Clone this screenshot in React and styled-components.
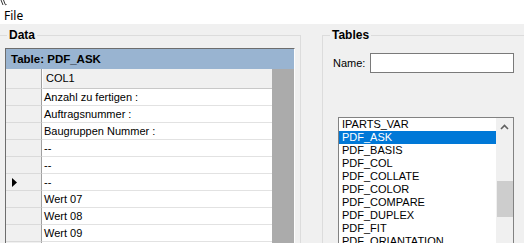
import styled, { createGlobalStyle } from "styled-components";

const GlobalStyle = createGlobalStyle`
  html, body {
    margin: 0;
    padding: 0;
    width: 524px;
    height: 243px;
    overflow: hidden;
    background: #f0f0f0;
  }
  body {
    font-family: "Liberation Sans", Arial, sans-serif;
    font-size: 11px;
    color: #000;
  }
`;

const Window = styled.div`
  width: 524px;
  height: 243px;
  display: flex;
  flex-direction: column;
  overflow: hidden;
`;

const MenuBar = styled.div`
  height: 24px;
  background: #fff;
  display: flex;
  flex-direction: column;
  flex-shrink: 0;
`;

const Corner = styled.svg`
  display: block;
  width: 8px;
  height: 6px;
`;

const MenuItem = styled.span`
  font-family: "Noto Sans", "Open Sans", sans-serif;
  font-size: 12px;
  line-height: 16px;
  padding: 2px 0 0 4px;
`;

const Main = styled.div`
  display: flex;
  align-items: flex-start;
  padding-top: 4px;
  gap: 21px;
`;

const Group = styled.fieldset`
  box-sizing: border-box;
  margin: 0 0 0 ${(p) => p.$offset || 0}px;
  width: ${(p) => p.$width}px;
  height: 260px;
  min-width: 0;
  border: 1px solid #dcdcdc;
  padding: 6px ${(p) => p.$padRight}px 0 ${(p) => p.$padLeft}px;
  flex-shrink: 0;
`;

const Legend = styled.legend`
  font-weight: bold;
  font-size: 12px;
  line-height: 14px;
  padding: 0 2px;
  margin-left: ${(p) => p.$shift || 0}px;
`;

const Grid = styled.div`
  border: 1px solid;
  border-color: #6d6d6d #fdfdfd #fdfdfd #6d6d6d;
  height: 220px;
  display: flex;
  flex-direction: column;
  background: #ababab;
`;

const Caption = styled.div`
  height: 20px;
  background: #99b4d1;
  font-weight: bold;
  font-size: 11.5px;
  line-height: 20px;
  padding-left: 5px;
  flex-shrink: 0;
`;

const Row = styled.div`
  display: flex;
  width: 266px;
  height: ${(p) => (p.$header ? 20 : 17)}px;
  flex-shrink: 0;
`;

const RowHead = styled.div`
  width: 36px;
  background: #f0f0f0;
  border-right: 1px solid #a0a0a0;
  border-bottom: 1px solid #dadada;
  display: flex;
  align-items: center;
  padding-left: 6px;
  box-sizing: border-box;
  flex-shrink: 0;
`;

const Cell = styled.div`
  flex: 1;
  background: ${(p) => (p.$header ? "#f0f0f0" : "#fff")};
  border-bottom: 1px solid ${(p) => (p.$header ? "#c8c8c8" : "#e2e2e2")};
  border-left: ${(p) => (p.$header ? "1px solid #fff" : "none")};
  padding-left: ${(p) => (p.$header ? 3 : 2)}px;
  line-height: ${(p) => (p.$header ? 19 : 16)}px;
  white-space: nowrap;
  overflow: hidden;
`;

const Arrow = styled.svg`
  width: 5px;
  height: 9px;
  display: block;
`;

const NameRow = styled.div`
  display: flex;
  align-items: center;
  margin: 5px 0 0 3px;
`;

const Label = styled.label`
  width: 37px;
  flex-shrink: 0;
`;

const TextBox = styled.input`
  box-sizing: border-box;
  width: 144px;
  height: 20px;
  border: 1px solid #7a7a7a;
  background: #fff;
  margin: 0;
  padding: 0 3px;
  outline: none;
`;

const ListBox = styled.div`
  box-sizing: border-box;
  width: 176px;
  height: 140px;
  margin: 44px 0 0 8px;
  border: 1px solid #828282;
  background: #fff;
  display: flex;
`;

const Items = styled.div`
  flex: 1;
  display: flex;
  flex-direction: column;
`;

const Item = styled.div`
  height: 13px;
  line-height: 13px;
  padding-left: 3px;
  white-space: nowrap;
  background: ${(p) => (p.$selected ? "#0078d7" : "transparent")};
  color: ${(p) => (p.$selected ? "#fff" : "#000")};
`;

const ScrollBar = styled.div`
  width: 17px;
  background: #f0f0f0;
  display: flex;
  flex-direction: column;
  align-items: center;
`;

const ScrollButton = styled.div`
  height: 17px;
  width: 17px;
  display: flex;
  align-items: center;
  justify-content: center;
`;

const Thumb = styled.div`
  width: 16px;
  height: 36px;
  background: #cdcdcd;
  margin-top: ${(p) => p.$top}px;
`;

const rows = [
  "Anzahl zu fertigen :",
  "Auftragsnummer :",
  "Baugruppen Nummer :",
  "--",
  "--",
  "--",
  "Wert 07",
  "Wert 08",
  "Wert 09",
  "",
];

const tables = [
  "IPARTS_VAR",
  "PDF_ASK",
  "PDF_BASIS",
  "PDF_COL",
  "PDF_COLLATE",
  "PDF_COLOR",
  "PDF_COMPARE",
  "PDF_DUPLEX",
  "PDF_FIT",
  "PDF_ORIANTATION",
];

const App = () => {
  return (
    <Window>
      <GlobalStyle />
      <MenuBar>
        <Corner viewBox="0 0 8 6">
          <path d="M1 0 L3 5 M3.5 0 L5 4 Q5.5 5.5 6.5 4.5" stroke="#333" strokeWidth="1" fill="none" />
        </Corner>
        <MenuItem>File</MenuItem>
      </MenuBar>
      <Main>
        <Group $width={303} $offset={-2} $padLeft={6} $padRight={5}>
          <Legend $shift={2}>Data</Legend>
          <Grid>
            <Caption>Table: PDF_ASK</Caption>
            <Row $header>
              <RowHead />
              <Cell $header>COL1</Cell>
            </Row>
            {rows.map((text, i) => (
              <Row key={i}>
                <RowHead>
                  {i === 5 && (
                    <Arrow viewBox="0 0 5 9">
                      <path d="M0 0 L5 4.5 L0 9 Z" fill="#000" />
                    </Arrow>
                  )}
                </RowHead>
                <Cell>{text}</Cell>
              </Row>
            ))}
          </Grid>
        </Group>
        <Group $width={220} $padLeft={7} $padRight={0}>
          <Legend>Tables</Legend>
          <NameRow>
            <Label>Name:</Label>
            <TextBox type="text" />
          </NameRow>
          <ListBox>
            <Items>
              {tables.map((t) => (
                <Item key={t} $selected={t === "PDF_ASK"}>
                  {t}
                </Item>
              ))}
            </Items>
            <ScrollBar>
              <ScrollButton>
                <svg width="9" height="6" viewBox="0 0 9 6">
                  <path d="M1 5 L4.5 1.5 L8 5" stroke="#606060" strokeWidth="1.6" fill="none" />
                </svg>
              </ScrollButton>
              <Thumb $top={46} />
            </ScrollBar>
          </ListBox>
        </Group>
      </Main>
    </Window>
  );
};

export default App;
